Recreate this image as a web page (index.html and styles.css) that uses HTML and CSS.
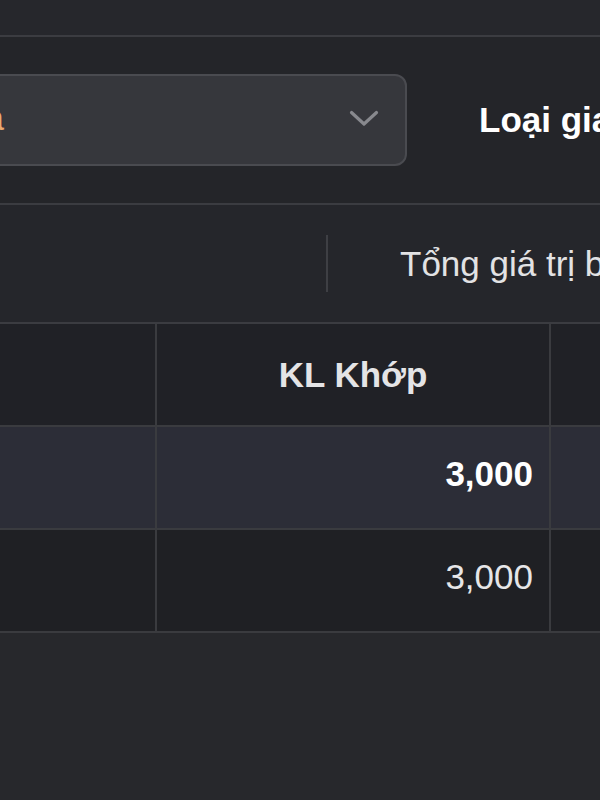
FILE: index.html
```html
<!DOCTYPE html>
<html lang="vi">
<head>
    <meta charset="UTF-8">
    <meta name="viewport" content="width=device-width, initial-scale=1.0">
    <title>Lịch sử khớp lệnh</title>
    <link rel="stylesheet" href="styles.css">
</head>
<body>
    <div class="topbar"></div>

    <div class="filters">
        <div class="select">
            <span class="select-value">Mua</span>
            <svg class="chevron" width="30" height="17" viewBox="0 0 30 17">
                <polyline points="2.5,2.5 15,14 27.5,2.5" fill="none" stroke="#88898e" stroke-width="3.2" stroke-linecap="round" stroke-linejoin="round"/>
            </svg>
        </div>
        <span class="filter-label">Loại giao dịch</span>
    </div>

    <div class="summary">
        <div class="summary-cell summary-spacer"></div>
        <div class="summary-divider"></div>
        <div class="summary-cell summary-text">Tổng giá trị bán</div>
    </div>

    <table class="orders">
        <colgroup>
            <col class="col-first">
            <col class="col-qty">
            <col>
        </colgroup>
        <thead>
            <tr>
                <th></th>
                <th>KL Khớp</th>
                <th></th>
            </tr>
        </thead>
        <tbody>
            <tr class="row-active">
                <td></td>
                <td class="num">3,000</td>
                <td></td>
            </tr>
            <tr>
                <td></td>
                <td class="num">3,000</td>
                <td></td>
            </tr>
        </tbody>
    </table>
</body>
</html>
```

FILE: styles.css
```css
/* General */
body {
    margin: 0;
    padding: 0;
    overflow: hidden;
    background-color: #27282c;
    color: #e6e6e8;
    font-family: "Liberation Sans", Arial, sans-serif;
}

/* Top bar */
.topbar {
    height: 35px;
    background-color: #26272c;
    border-bottom: 2px solid #3b3c41;
}

/* Filters */
.filters {
    display: flex;
    align-items: center;
    height: 166px;
    background-color: #242529;
    border-bottom: 2px solid #3b3c41;
}

.select {
    box-sizing: border-box;
    display: flex;
    flex-shrink: 0;
    align-items: center;
    justify-content: space-between;
    width: 500px;
    height: 92px;
    margin-left: -93px;
    padding: 0 26px 4px 27px;
    background-color: #36373c;
    border: 2px solid #4a4b50;
    border-radius: 12px;
}

.select-value {
    color: #e9a96f;
    font-size: 35px;
}

.chevron {
    display: block;
}

.filter-label {
    margin-left: 72px;
    color: #fff;
    font-size: 35px;
    font-weight: bold;
    white-space: nowrap;
}

/* Summary */
.summary {
    display: flex;
    align-items: center;
    height: 117px;
    background-color: #25262b;
    border-bottom: 2px solid #3b3c41;
}

.summary-spacer {
    flex-shrink: 0;
    width: 326px;
}

.summary-divider {
    flex-shrink: 0;
    width: 2px;
    height: 57px;
    background-color: #3e3f44;
}

.summary-text {
    margin-left: 72px;
    font-size: 35px;
    color: #e2e2e4;
    white-space: nowrap;
}

/* Orders table */
.orders {
    width: 760px;
    table-layout: fixed;
    border-collapse: separate;
    border-spacing: 0;
}

.col-first {
    width: 157px;
}

.col-qty {
    width: 394px;
}

.orders th,
.orders td {
    box-sizing: border-box;
    height: 103px;
    padding: 0 16px;
    border-right: 2px solid #3a3b3f;
    border-bottom: 2px solid #3a3b3f;
}

.orders th {
    background-color: #202126;
    font-size: 35px;
    font-weight: bold;
    text-align: center;
    color: #e4e4e6;
}

.orders td {
    background-color: #1f2024;
}

.orders .row-active td {
    background-color: #2c2d37;
    font-weight: bold;
    color: #fff;
}

.orders .num {
    text-align: right;
    font-size: 35px;
    padding-bottom: 8px;
}
```
